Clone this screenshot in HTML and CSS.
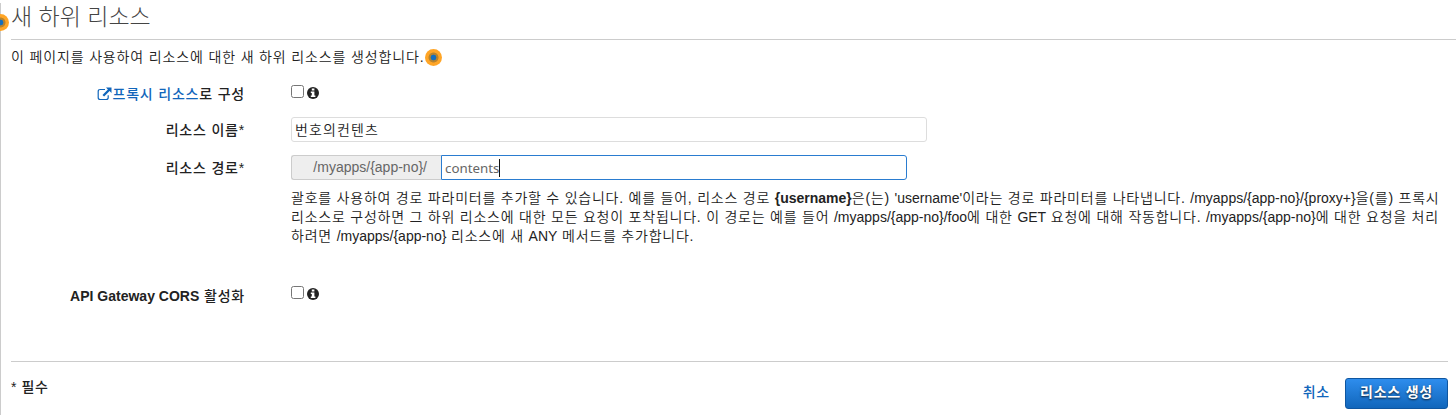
FILE: index.html
```html
<!DOCTYPE html>
<html lang="ko">
<head>
<meta charset="utf-8">
<title>새 하위 리소스</title>
<link rel="stylesheet" href="styles.css">
</head>
<body>
<svg class="defs" width="0" height="0" aria-hidden="true">
  <symbol id="info" viewBox="0 0 12 12"><circle cx="6" cy="6" r="6" fill="#222"/><path d="M4.800 1.500h2.600v2H4.800zM3.800 4.500h3.600v4h1v1.600H3.800V8.500h1V6.100h-1z" fill="#fff"/></symbol>
</svg>
<main class="panel">
  <span class="beacon beacon-edge"></span>
  <h1 class="title">새 하위 리소스</h1>
  <p class="intro"><span class="intro-text">이 페이지를 사용하여 리소스에 대한 새 하위 리소스를 생성합니다.</span><span class="beacon"></span></p>
  <form class="form">
    <div class="row row-proxy">
      <span class="label"><a class="link"><svg class="external" viewBox="0 0 15 14" width="15" height="14"><path d="M8 2.500H3.200Q1.200 2.500 1.200 4.500V10.500Q1.200 12.500 3.200 12.500H9.200Q11.200 12.500 11.200 10.500V8.300" fill="none" stroke="currentColor" stroke-width="1.2"/><path d="M9 .5h5.500V6l-1.900-1.900-5.500 5.400-1.600-1.600 5.400-5.500z" fill="currentColor"/></svg>프록시 리소스</a>로 구성</span>
      <span class="check"><span class="box"></span><svg class="info" width="12" height="12"><use href="#info"/></svg></span>
    </div>
    <div class="row row-name">
      <span class="label">리소스 이름*</span>
      <div class="input name">번호의컨텐츠</div>
    </div>
    <div class="row row-path">
      <span class="label">리소스 경로*</span>
      <div class="group"><span class="prefix">/myapps/{app-no}/</span><div class="input path"><span class="value">contents</span><span class="caret"></span></div></div>
    </div>
    <p class="help"><span class="line">괄호를 사용하여 경로 파라미터를 추가할 수 있습니다. 예를 들어, 리소스 경로 <b class="latin">{username}</b>은(는) <span class="latin">'username'</span>이라는 경로 파라미터를 나타냅니다. <span class="latin">/myapps/{app-no}/{proxy+}</span>을(를) 프록시</span>
    <span class="line">리소스로 구성하면 그 하위 리소스에 대한 모든 요청이 포착됩니다. 이 경로는 예를 들어 <span class="latin">/myapps/{app-no}/foo</span>에 대한 <span class="latin">GET</span> 요청에 대해 작동합니다. <span class="latin">/myapps/{app-no}</span>에 대한 요청을 처리</span>
    <span class="line">하려면 <span class="latin">/myapps/{app-no}</span> 리소스에 새 <span class="latin">ANY</span> 메서드를 추가합니다.</span></p>
    <div class="row row-cors">
      <span class="label"><b class="latin">API Gateway CORS</b> 활성화</span>
      <span class="check"><span class="box"></span><svg class="info" width="12" height="12"><use href="#info"/></svg></span>
    </div>
  </form>
  <footer class="footer">
    <span class="required">* 필수</span>
    <div class="actions"><a class="cancel">취소</a><span class="create">리소스 생성</span></div>
  </footer>
</main>
</body>
</html>
```
FILE: styles.css
```css
* { box-sizing: border-box; }
body {
  margin: 0;
  height: 415px;
  overflow: hidden;
  background: #fff;
  color: #222;
  font: 350 14px/19px "Liberation Sans", "Noto Sans CJK KR", sans-serif;
}
.defs { position: absolute; }
.panel { position: relative; height: 415px; padding-left: 11px; }
.panel::before {
  content: "";
  position: absolute;
  left: 0; top: 3px; bottom: 0;
  width: 1px;
  background: #ccc;
}
.title {
  margin: 0;
  height: 40px;
  border-bottom: 1px solid #ccc;
  color: #444;
  font-size: 23px;
  font-weight: 300;
  line-height: 34px;
  white-space: nowrap;
}
.intro { display: flex; align-items: center; margin: 7px 0 0; height: 20px; white-space: nowrap; }
.intro-text { width: 414px; letter-spacing: 0.85px; }
.beacon {
  flex: none;
  width: 17px;
  height: 17px;
  border-radius: 50%;
  background: radial-gradient(circle closest-side, #146ebe 0 2.6px, #b8832d 3.2px 4.6px, #ffa526 5.4px);
}
.beacon-edge { position: absolute; left: -8px; top: 14px; }
.row { display: flex; align-items: flex-start; }
.label { width: 234px; margin-right: 46px; text-align: right; font-weight: 500; letter-spacing: 0.8px; white-space: nowrap; }
.latin { letter-spacing: 0; }
.link, .cancel { color: #1166bb; }
.external { vertical-align: -2px; }
.row-proxy { margin-top: 18px; height: 32px; }
.check { display: flex; gap: 3px; }
.box { width: 13px; height: 13px; border: 1px solid #767676; border-radius: 2.5px; }
.info { margin-top: 2px; }
.input { height: 25px; padding: 0 3px; border: 1px solid #ddd; border-radius: 3px; line-height: 25px; white-space: nowrap; }
.row-name { height: 38px; }
.name { width: 636px; letter-spacing: 1.1px; }
.row-name .label, .row-path .label { padding-top: 4px; }
.row-path { height: 34px; }
.group { display: flex; width: 616px; }
.prefix {
  width: 150px;
  height: 25px;
  padding-right: 14px;
  border: 1px solid #ccc;
  border-right: 0;
  border-radius: 3px 0 0 3px;
  background: #eee;
  color: #666;
  line-height: 23px;
  text-align: right;
}
.path {
  display: flex;
  align-items: center;
  flex: 1;
  border-color: #2a7cd0;
  border-radius: 0 3px 3px 0;
  color: #666;
  font-family: "Noto Sans", sans-serif;
  font-size: 13.3px;
  font-weight: 400;
}
.value { padding-top: 2px; line-height: 23px; }
.caret { width: 1px; height: 18px; background: #111; }
.help { margin: 0 0 0 280px; height: 97px; letter-spacing: 0.77px; }
.line { display: block; white-space: nowrap; }
.row-cors { height: 75px; }
.row-cors .label { padding-top: 1px; }
.footer {
  display: flex;
  justify-content: space-between;
  width: 1437px;
  border-top: 1px solid #ccc;
  padding-top: 16px;
}
.required { font-weight: 500; letter-spacing: 0.6px; }
.actions { display: flex; gap: 15px; }
.cancel { padding-top: 5px; font-weight: 500; letter-spacing: 0.8px; }
.create {
  width: 103px;
  height: 31px;
  border: 1px solid #0f56a0;
  border-radius: 3px;
  background: linear-gradient(#2e8ded, #1166bb);
  color: #fff;
  font-weight: bold;
  letter-spacing: 0.8px;
  line-height: 27px;
  text-align: center;
  text-shadow: 0 1px 2px #123;
}
```
